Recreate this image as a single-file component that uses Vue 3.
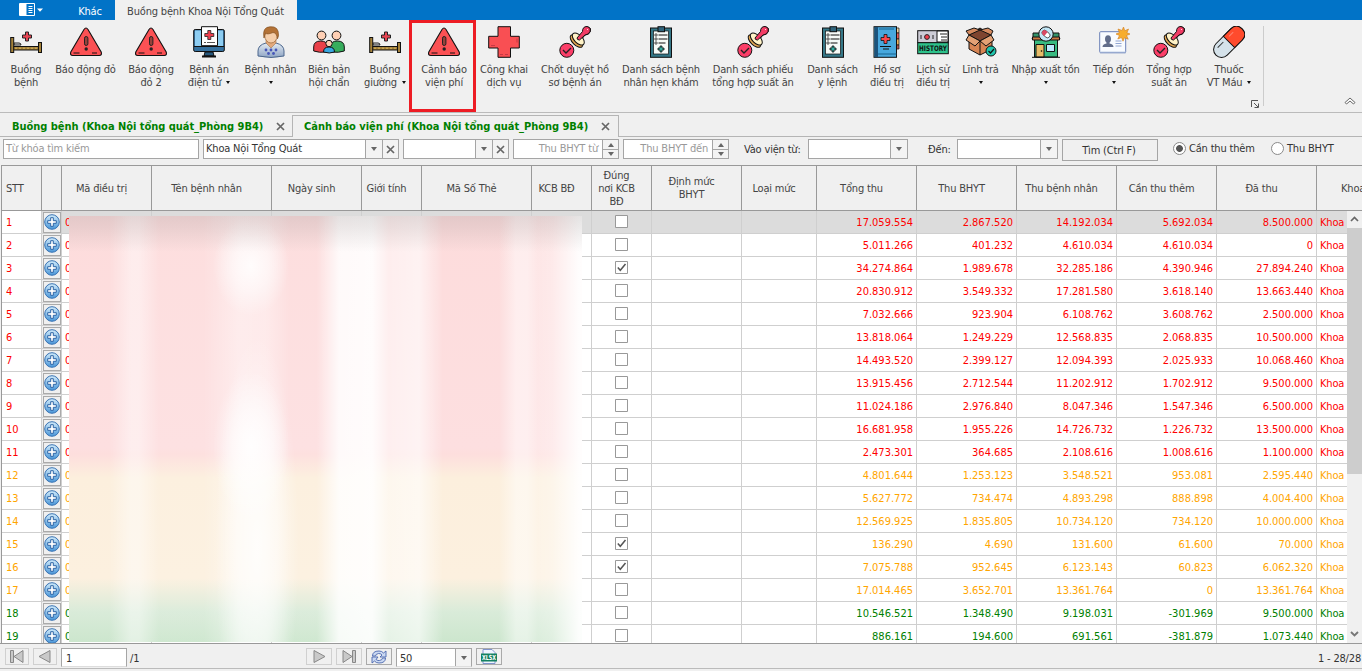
<script setup>
const ribbon = [
  { w: 40, icon: 'bed', lines: ['Buồng', 'bệnh'] },
  { w: 79, icon: 'warn', lines: ['Báo động đỏ'] },
  { w: 52, icon: 'warn', lines: ['Báo động', 'đỏ 2'] },
  { w: 64, icon: 'monitor', lines: ['Bệnh án', 'điện tử'], arrow: true },
  { w: 59, icon: 'patient', lines: ['Bệnh nhân', ''], arrow: true },
  { w: 58, icon: 'group', lines: ['Biên bản', 'hội chẩn'] },
  { w: 54, icon: 'bed', lines: ['Buồng', 'giường'], arrow: true },
  { w: 64, icon: 'warn', lines: ['Cảnh báo', 'viện phí'], marked: true },
  { w: 56, icon: 'cross', lines: ['Công khai', 'dịch vụ'] },
  { w: 86, icon: 'stamp', lines: ['Chốt duyệt hồ', 'sơ bệnh án'] },
  { w: 86, icon: 'clip', lines: ['Danh sách bệnh', 'nhân hẹn khám'] },
  { w: 98, icon: 'stamp', lines: ['Danh sách phiếu', 'tổng hợp suất ăn'] },
  { w: 61, icon: 'clip', lines: ['Danh sách', 'y lệnh'] },
  { w: 48, icon: 'book', lines: ['Hồ sơ', 'điều trị'] },
  { w: 44, icon: 'history', lines: ['Lịch sử', 'điều trị'] },
  { w: 51, icon: 'box', lines: ['Lĩnh trả', ''], arrow: true },
  { w: 79, icon: 'store', lines: ['Nhập xuất tồn', ''], arrow: true },
  { w: 57, icon: 'card', lines: ['Tiếp đón', ''], arrow: true },
  { w: 54, icon: 'stamp', lines: ['Tổng hợp', 'suất ăn'] },
  { w: 66, icon: 'pill', lines: ['Thuốc', 'VT Máu'], arrow: true },
]

const headers = [
  ['STT'], [''], ['Mã điều trị'], ['Tên bệnh nhân'], ['Ngày sinh'], ['Giới tính'], ['Mã Số Thẻ'],
  ['KCB BĐ'], ['Đúng', 'nơi KCB', 'BĐ'], ['Định mức', 'BHYT'], ['Loại mức'], ['Tổng thu'],
  ['Thu BHYT'], ['Thu bệnh nhân'], ['Cần thu thêm'], ['Đã thu'], ['Khoa'],
]

const rows = [
  '17.059.554 2.867.520 14.192.034 5.692.034 8.500.000',
  '5.011.266 401.232 4.610.034 4.610.034 0',
  '34.274.864 1.989.678 32.285.186 4.390.946 27.894.240',
  '20.830.912 3.549.332 17.281.580 3.618.140 13.663.440',
  '7.032.666 923.904 6.108.762 3.608.762 2.500.000',
  '13.818.064 1.249.229 12.568.835 2.068.835 10.500.000',
  '14.493.520 2.399.127 12.094.393 2.025.933 10.068.460',
  '13.915.456 2.712.544 11.202.912 1.702.912 9.500.000',
  '11.024.186 2.976.840 8.047.346 1.547.346 6.500.000',
  '16.681.958 1.955.226 14.726.732 1.226.732 13.500.000',
  '2.473.301 364.685 2.108.616 1.008.616 1.100.000',
  '4.801.644 1.253.123 3.548.521 953.081 2.595.440',
  '5.627.772 734.474 4.893.298 888.898 4.004.400',
  '12.569.925 1.835.805 10.734.120 734.120 10.000.000',
  '136.290 4.690 131.600 61.600 70.000',
  '7.075.788 952.645 6.123.143 60.823 6.062.320',
  '17.014.465 3.652.701 13.361.764 0 13.361.764',
  '10.546.521 1.348.490 9.198.031 -301.969 9.500.000',
  '886.161 194.600 691.561 -381.879 1.073.440',
].map((line, i) => ({
  n: i + 1,
  money: line.split(' '),
  checked: [3, 15, 16].includes(i + 1),
  tone: i < 11 ? 'red' : i < 17 ? 'orange' : 'green',
}))
</script>

<template>
  <svg width="0" height="0" class="defs">
    <defs>
      <linearGradient id="gBlue" x1="0" y1="0" x2="0" y2="1">
        <stop offset="0" stop-color="#d3ecfb" /><stop offset="1" stop-color="#4795d8" />
      </linearGradient>
      <linearGradient id="gBody" x1="0" y1="0" x2="0" y2="1">
        <stop offset="0" stop-color="#e3ebf3" /><stop offset="1" stop-color="#8fa5c4" />
      </linearGradient>
      <symbol id="bed" viewBox="0 0 32 32">
        <path d="M4 17h5q2 0 2 2H4z" fill="#ddd" stroke="#222" />
        <rect x="3" y="20.5" width="27" height="3.5" fill="#a5823a" stroke="#111" />
        <path d="M5 22.2h23" stroke="#d6b45e" stroke-dasharray="2 2" />
        <rect x=".7" y="11.5" width="3" height="15" fill="#a5823a" stroke="#111" />
        <rect x="28.5" y="16.5" width="3" height="10" fill="#a5823a" stroke="#111" />
        <path d="M15.5 6h3v3h3v3h-3v3h-3v-3h-3V9h3z" fill="#e64553" stroke="#222" />
      </symbol>
      <symbol id="warn" viewBox="0 0 32 32">
        <path d="M14 3.500q2-3 4 0l13.200 22.500q1 3.500-2 3.500H2.800q-3 0-2-3.500z" fill="#fb5154" stroke="#111" stroke-width="1.100" />
        <path d="M3.500 27h6M22 27h5" stroke="#111" />
        <rect x="14.500" y="10.500" width="3.400" height="9" rx="1.700" fill="#96413a" stroke="#222" />
        <circle cx="16.200" cy="23" r="1.700" fill="#222" />
      </symbol>
      <symbol id="monitor" viewBox="0 0 32 32">
        <path d="M12 26h8l1 4H11z" fill="#26577c" stroke="#111" />
        <path d="M9 30.500h14" stroke="#111" stroke-width="2" />
        <rect x=".7" y="3.500" width="30.600" height="22" rx="1.500" fill="#35719f" stroke="#111" />
        <path d="M2 4.500h28v15.500H2z" fill="#8dcdf2" />
        <path d="M1 20.500h30" stroke="#111" />
        <path d="M8.500.7h16v19h-16z" fill="#fff" stroke="#111" />
        <path d="M14.800 4.500h3v3h3v3h-3v3h-3v-3h-3v-3h3z" fill="#ef4050" stroke="#222" stroke-width=".8" />
        <path d="M11 16.500h2m1 0h8" stroke="#555" />
      </symbol>
      <symbol id="patient" viewBox="0 0 32 32">
        <path d="M3 30V25q0-6 8-8h10q8 2 8 8v5q-13 3-26 0z" fill="url(#gBody)" stroke="#4c678d" />
        <path d="M11 17l5 5 5-5v-4H11z" fill="#e2a97c" stroke="#96663c" stroke-width=".5" />
        <ellipse cx="16" cy="9.500" rx="6.300" ry="7.500" fill="#f5ceaa" stroke="#9a6435" stroke-width=".7" />
        <path d="M9 12Q7 1 15 .8q9-1 8.500 9l-1 3Q22 7 18 6.500 12 9 10.500 7z" fill="#b37236" stroke="#845021" stroke-width=".7" />
        <g fill="#4656b8"><circle cx="11" cy="24" r="1.400" /><circle cx="16" cy="24" r="1.400" /><circle cx="21" cy="24" r="1.400" /><circle cx="13.500" cy="27.500" r="1.400" /><circle cx="18.500" cy="27.500" r="1.400" /></g>
      </symbol>
      <symbol id="group" viewBox="0 0 32 32">
        <g stroke="#111">
          <path d="M.7 25v-4q0-6 7-6 6 0 7 5v6q-9 1-14-1z" fill="#e9414a" />
          <path d="M31.300 25v-4q0-6-7-6-6 0-7 5v6q9 1 14-1z" fill="#37ad5d" />
          <circle cx="8.500" cy="9.500" r="4.400" fill="#ffd0b5" /><circle cx="23.500" cy="9.500" r="4.400" fill="#ffd0b5" />
          <path d="M10.500 26q0-5 5.500-5t5.500 5q-5 2-11 0z" fill="#38a7e0" />
          <circle cx="16" cy="17.500" r="3.200" fill="#ffd0b5" />
        </g>
      </symbol>
      <symbol id="cross" viewBox="0 0 32 32">
        <path d="M10 .7h12.500v9.600h8.800V22h-8.800v9.300H10V22H.7V10.300H10z" fill="#f94f53" stroke="#111" />
        <path d="M12 28.500h3m2 0h3M3 19.500h4m22-7v4" stroke="#c73945" />
      </symbol>
      <symbol id="stamp" viewBox="0 0 32 32">
        <g stroke="#111">
          <path d="M20 11l5-5q0-5 4-5 4 1 2 5-1 3-5 3l-4 5z" fill="#f23c65" />
          <ellipse cx="17.500" cy="15" rx="4" ry="8" transform="rotate(-45 17.500 15)" fill="#e2a651" />
          <ellipse cx="19.300" cy="13" rx="4" ry="7.500" transform="rotate(-45 19.300 13)" fill="#fff3c7" />
          <path d="M18 12l5.500-6.500q0-5 4.500-5 4 1 3 5-1 3-5 3.500L20.500 14q-2.500 0-2.500-2z" fill="#f23c65" />
          <path d="M28 3l1 1" stroke="#ffd2dc" />
          <circle cx="7.800" cy="24.300" r="7" fill="#fb3e68" />
        </g>
        <path d="M4 24l3 3 5-5" fill="none" stroke="#222" stroke-width="1.400" />
      </symbol>
      <symbol id="clip" viewBox="0 0 32 32">
        <rect x="5.500" y="2" width="21" height="29.300" fill="#357787" stroke="#111" />
        <rect x="8.500" y="5" width="15" height="23" fill="#f7fbf8" stroke="#111" stroke-width=".7" />
        <rect x="13" y=".7" width="6.500" height="5" fill="#30647b" stroke="#111" />
        <path d="M13.500 9h9m-9 4h9m-9 4h7" stroke="#111" />
        <g fill="none" stroke="#333" stroke-width=".8"><path d="M10 8h2v2h-2zm0 4h2v2h-2zm0 4h2v2h-2z" /></g>
        <path d="M15 20h2v2h2v2h-2v2h-2v-2h-2v-2h2z" fill="#35ada0" stroke="#111" stroke-width=".8" />
      </symbol>
      <symbol id="book" viewBox="0 0 32 32">
        <g stroke="#111" stroke-width=".7"><path d="M24 2h4v5h-4z" fill="#f5d39b" /><path d="M24 7h4v6h-4z" fill="#e75d56" /><path d="M24 13h4v6h-4z" fill="#edb25c" /><path d="M24 19h4v4h-4z" fill="#b35551" /></g>
        <rect x="3" y=".7" width="22.500" height="30.600" fill="#48a8dd" stroke="#111" />
        <path d="M5.500 1v30" stroke="#1c537c" stroke-width="3" />
        <path d="M7 28h18.500M8 3h15" stroke="#176490" />
        <path d="M13 8.500h3v3h3v3h-3v3h-3v-3h-3v-3h3z" fill="#fb494e" stroke="#111" stroke-width=".8" />
        <path d="M9 20.500h11M12 23h6" stroke="#111" />
      </symbol>
      <symbol id="history" viewBox="0 0 32 32">
        <rect x=".7" y="4.700" width="30.600" height="12" fill="#cdccd6" stroke="#111" />
        <path d="M20 5h11v11H20z" fill="#fff" stroke="#111" /><path d="M23 8h7m-6 3h6m-6 3h6M4 9v4m12-4v4" stroke="#222" />
        <circle cx="10" cy="11" r="2.400" fill="#f23d4c" stroke="#222" />
        <rect x=".7" y="16.700" width="30.600" height="11" fill="#2dc28b" stroke="#111" />
        <text x="2" y="25" textLength="28" font-family="DejaVu Sans" font-weight="bold" font-size="7.500" letter-spacing="0" lengthAdjust="spacingAndGlyphs" fill="#111">HISTORY</text>
      </symbol>
      <symbol id="box" viewBox="0 0 32 32">
        <g stroke="#111" stroke-linejoin="round">
          <path d="M4 11l11-4 12 4v12l-12 6-11-6z" fill="#d78554" />
          <path d="M4 9l11-7 11 7-11 6z" fill="#7e442f" />
          <path d="M4 9l11 6-5 5-9-6zM26 9l-11 6 6 5 8-6z" fill="#e3a175" />
          <path d="M4 9L1 5l8-3 6 2 8-2 5 3-2 4-11-5z" fill="#d48a60" />
          <path d="M15 15v14" />
          <circle cx="26" cy="25" r="5" fill="#1fc5ad" />
        </g>
        <path d="M23.500 25l2 2 3.500-4" fill="none" stroke="#111" stroke-width="1.200" />
      </symbol>
      <symbol id="store" viewBox="0 0 32 32">
        <path d="M4.500 13h23v18h-23z" fill="#38bb81" stroke="#111" />
        <path d="M3 7h26v4l1 2H2l1-2z" fill="#34946b" stroke="#111" />
        <path d="M2.500 11h27v3h-27z" fill="#c87843" stroke="#111" />
        <path d="M6 18.500h8V31H6z" fill="#e8bd68" stroke="#111" /><circle cx="11.500" cy="25" r=".8" />
        <path d="M16.500 18.500h8v7h-8z" fill="#bdeaff" stroke="#111" />
        <path d="M2 31.300h28" stroke="#111" />
        <circle cx="16" cy="8" r="7.200" fill="#c3e7f6" stroke="#111" />
        <g transform="rotate(40 16 8)"><rect x="11.500" y="5.500" width="9" height="5" rx="2.500" fill="#fff" stroke="#222" stroke-width=".7" /><path d="M11.500 8q0-2.500 2.500-2.500h2v5h-2q-2.500 0-2.500-2.500" fill="#d94863" /></g>
      </symbol>
      <symbol id="card" viewBox="0 0 32 32">
        <rect x="1.700" y="5.700" width="26" height="21" rx="1" fill="#f8fbff" stroke="#6a80b7" />
        <path d="M2 26.500h26" stroke="#97a9cf" stroke-width="1.500" />
        <ellipse cx="10" cy="13" rx="3" ry="3.800" fill="#616d8b" /><path d="M4.500 21q0-3 4-3.500v-2h3v2q4 .5 4 3.500z" fill="#616d8b" />
        <path d="M17.500 15h6m-6 2.500h6m-6 2.500h6" stroke="#91a6d2" stroke-width="1.200" />
        <path d="M25.500 1l1.300 3.800 3.700-1.800-1.600 3.800L32 8l-3.500 1.500 1.700 3.700-3.700-1.500-1.500 3.500-1.500-3.700-3.700 1.500 1.700-3.500L18 8l3.500-1.400L20 3l4 1.500z" fill="#f7ad2c" stroke="#d6862c" stroke-width=".7" />
      </symbol>
      <symbol id="pill" viewBox="0 0 32 32">
        <g transform="rotate(-45 16 16)"><rect x="-2.500" y="8" width="37" height="16" rx="8" fill="#d5e2ea" stroke="#111" /><path d="M16 8h10.500q8 0 8 8t-8 8H16z" fill="#ff4b2d" stroke="#111" /><path d="M4 12h8" stroke="#333" /><path d="M20 12h6" stroke="#ff806e" /></g>
      </symbol>
      <symbol id="plus" viewBox="0 0 16 16">
        <circle cx="8" cy="8" r="7.300" fill="url(#gBlue)" stroke="#3973b3" />
        <path d="M6.700 3.700h2.600v3h3v2.600h-3v3H6.700v-3h-3V6.700h3z" fill="#fff" stroke="#215b9f" stroke-width=".9" />
      </symbol>
      <symbol id="x" viewBox="0 0 9 9"><path d="M1 1l7 7m0-7l-7 7" stroke="#666" stroke-width="1.700" /></symbol>
    </defs>
  </svg>

  <div class="app">
    <header class="top">
      <div class="menu">
        <svg width="26" height="14" viewBox="0 0 26 14"><path d="M.5.500h15v12H.5z" fill="none" stroke="#fff" /><path d="M1 1h6.500v11H1z" fill="#fff" /><path d="M9.500 3.500h4m-4 2h4m-4 2h4m-4 2h4" stroke="#fff" /><path d="M18 5.500h6l-3 3.300z" fill="#fff" /></svg>
      </div>
      <div class="toptab">Khác</div>
      <div class="toptab on">Buồng bệnh Khoa Nội Tổng Quát</div>
    </header>

    <section class="ribbon">
      <div v-for="(r, i) in ribbon" :key="i" class="tool" :class="{ marked: r.marked }" :style="{ width: r.w + 'px' }">
        <svg width="32" height="32"><use :href="'#' + r.icon" /></svg>
        <div v-for="(l, k) in r.lines" :key="k" class="tl">{{ l }}<i v-if="r.arrow && k === r.lines.length - 1" class="caret" :class="{ gap: l }" /></div>
      </div>
      <div class="sep"></div>
      <svg class="launch" width="8" height="8" viewBox="0 0 8 8"><path d="M.5 7V.5H7M3 3l4 4M7.500 3.500v4h-4" fill="none" stroke="#555" /></svg>
      <svg class="fold" width="12" height="9" viewBox="0 0 12 9"><path d="M1 5.500L6 1l5 4.500L9.500 7 6 4 2.500 7z" fill="#fff" stroke="#666" /></svg>
    </section>

    <nav class="tabs">
      <div class="tab t1"><span>Buồng bệnh (Khoa Nội tổng quát_Phòng 9B4)</span><svg width="9" height="9"><use href="#x" /></svg></div>
      <div class="tab t2"><span>Cảnh báo viện phí (Khoa Nội tổng quát_Phòng 9B4)</span><svg width="9" height="9"><use href="#x" /></svg></div>
      <div class="rest"></div>
    </nav>

    <section class="filter">
      <div class="box search ph">Từ khóa tìm kiếm</div>
      <div class="box c1"><span>Khoa Nội Tổng Quát</span><b><i class="tri" /></b><b><svg width="9" height="9"><use href="#x" /></svg></b></div>
      <div class="box c2"><span></span><b><i class="tri" /></b><b><svg width="9" height="9"><use href="#x" /></svg></b></div>
      <div class="box spin ph"><span>Thu BHYT từ</span><em><b><i class="tri up" /></b><b><i class="tri" /></b></em></div>
      <div class="box spin ph"><span>Thu BHYT đến</span><em><b><i class="tri up" /></b><b><i class="tri" /></b></em></div>
      <label class="l1">Vào viện từ:</label>
      <div class="box c3"><span></span><b><i class="tri" /></b></div>
      <label class="l2">Đến:</label>
      <div class="box c4"><span></span><b><i class="tri" /></b></div>
      <button class="find">Tìm (Ctrl F)</button>
      <div class="radio r1"><i class="dot on" />Cần thu thêm</div>
      <div class="radio r2"><i class="dot" />Thu BHYT</div>
    </section>

    <section class="grid">
      <div class="line head">
        <div v-for="(h, i) in headers" :key="i" class="cell"><div v-for="(t, k) in h" :key="k">{{ t }}</div></div>
      </div>
      <div class="body">
        <div v-for="r in rows" :key="r.n" class="line row" :class="[r.tone, { sel: r.n === 1 }]">
          <div class="cell num">{{ r.n }}</div>
          <div class="cell pluscell"><div class="pb"><svg width="16" height="16"><use href="#plus" /></svg></div></div>
          <div class="cell code">0</div>
          <div class="cell"></div><div class="cell"></div><div class="cell"></div><div class="cell"></div><div class="cell"></div>
          <div class="cell chk"><svg width="13" height="13" viewBox="0 0 13 13"><path d="M.5.500h12v12H.5z" fill="#fff" stroke="#999" /><path v-if="r.checked" d="M2.800 6.500l2.500 2.800L10.500 3" fill="none" stroke="#555" stroke-width="1.500" /></svg></div>
          <div class="cell"></div><div class="cell"></div>
          <div v-for="(m, k) in r.money" :key="k" class="cell money">{{ m }}</div>
          <div class="cell dept">Khoa</div>
        </div>
        <div class="veil"></div>
        <div class="scroll">
          <svg width="9" height="6" viewBox="0 0 9 6"><path d="M1 5l3.500-3.500L8 5" fill="none" stroke="#666" stroke-width="1.700" /></svg>
          <div class="thumb"></div>
          <svg width="9" height="6" viewBox="0 0 9 6"><path d="M1 1l3.500 3.500L8 1" fill="none" stroke="#777" stroke-width="1.900" /></svg>
        </div>
      </div>
    </section>

    <footer class="pager">
      <div class="pbtn w24"><svg width="14" height="13" viewBox="0 0 14 13"><path d="M.5.500h3v12h-3zM13 .5v12L4 6.500z" fill="#c9c9c9" stroke="#888" /></svg></div>
      <div class="pbtn w24 m5"><svg width="14" height="13" viewBox="0 0 14 13"><path d="M12 .5v12L1 6.500z" fill="#c9c9c9" stroke="#888" /></svg></div>
      <div class="pin">1</div>
      <div class="of">/1</div>
      <div class="pbtn w26"><svg width="14" height="13" viewBox="0 0 14 13"><path d="M2 .5v12l11-6z" fill="#c9c9c9" stroke="#888" /></svg></div>
      <div class="pbtn w26 m5"><svg width="14" height="13" viewBox="0 0 14 13"><path d="M10.500.500h3v12h-3zM1 .5v12l9-6z" fill="#c9c9c9" stroke="#888" /></svg></div>
      <div class="pbtn w26 m5 strong"><svg width="16" height="14" viewBox="0 0 16 14"><path d="M1.500 6q0-5 6.500-5 3 0 4.500 2L15 1v6H9l2-2Q9.500 3.300 7.500 3.500 4.500 4 4.500 6zM14.500 8q0 5-6.500 5-3 0-4.500-2L1 13V7h6L5 9.500Q7 11 8.500 10.500 11.500 10 11.500 8z" fill="#cbd9f2" stroke="#4b68af" stroke-width=".9" /></svg></div>
      <div class="psel"><span>50</span><b><i class="tri" /></b></div>
      <div class="pbtn w26 m5 strong"><svg width="18" height="15" viewBox="0 0 18 15"><path d="M3 .5h9l3 3v11H3z" fill="#eef4ff" stroke="#8094cd" /><path d="M1 4.500h16v8H1z" fill="#138161" /><text x="2" y="11.200" textLength="14" lengthAdjust="spacingAndGlyphs" letter-spacing="0" font-size="7" font-weight="bold" font-family="DejaVu Sans" fill="#fff">XLSX</text></svg></div>
      <div class="total">1 - 28/28</div>
    </footer>
  </div>
</template>

<style>
body { margin: 0; overflow: hidden; }
</style>

<style scoped>
.defs { position: absolute; }
* { box-sizing: border-box; }
.app { width: 1362px; height: 671px; background: #f0f0f0; overflow: hidden; display: flex; flex-direction: column; font: 11px/13px "DejaVu Sans Condensed", "DejaVu Sans", sans-serif; font-stretch: condensed; letter-spacing: -.18px; color: #444; white-space: nowrap; }
.top { height: 20px; flex: none; background: #0173c7; display: flex; }
.menu { width: 65px; padding: 3px 0 0 19px; }
.toptab { width: 50px; text-align: center; color: #fff; line-height: 23px; }
.toptab.on { width: 182px; background: #f0f0f0; color: #444; padding-right: 1px; }
.ribbon { height: 93px; flex: none; border-bottom: 1px solid #bbb; display: flex; padding-left: 6px; position: relative; }
.tool { display: flex; flex-direction: column; align-items: center; padding-top: 6px; flex: none; position: relative; }
.tool svg { margin-bottom: 5px; flex: none; }
.tool.marked::after { content: ''; box-sizing: border-box; position: absolute; left: -3px; top: 0; width: 67px; height: 92px; border: 3px solid #ed1c24; }
.tl { height: 13px; display: flex; align-items: center; }
.caret { border: 2.500px solid transparent; border-top: 3px solid #111; border-bottom: 0; }
.caret.gap { margin-left: 5px; }
.sep { width: 1px; height: 80px; margin: 6px 0 0 1px; background: #ccc; }
.launch { position: absolute; left: 1251px; top: 80px; }
.fold { position: absolute; left: 1344px; top: 77px; }
.tabs { height: 24px; flex: none; display: flex; font-weight: bold; color: #008000; }
.tab { display: flex; align-items: center; justify-content: space-between; letter-spacing: -.03px; padding-top: 3px; }
.t1 { width: 292px; padding-left: 12px; padding-right: 7px; border-bottom: 1px solid #b5b5b5; }
.t2 { width: 327px; margin-top: 2px; padding: 0 8px 1px 11px; border: 1px solid #b5b5b5; border-bottom: 0; }
.rest { flex: 1; border-bottom: 1px solid #b5b5b5; }
.filter { height: 28px; flex: none; display: flex; align-items: flex-start; padding: 2px 0 0 3px; }
.box { height: 20px; background: #fff; border: 1px solid #a5a5a5; display: flex; flex: none; line-height: 18px; padding-left: 3px; margin-right: 4px; }
.box span { flex: 1; color: #333; }
.box b { width: 17px; border-left: 1px solid #a5a5a5; background: #f3f3f3; display: flex; align-items: center; justify-content: center; flex: none; }
.box b + b { width: 16px; }
.tri { border: 3.500px solid transparent; border-top: 4px solid #666; border-bottom: 0; }
.tri.up { border-top: 0; border-bottom: 4px solid #666; }
.ph, .box.ph span { color: #999; }
.search { width: 196px; padding-left: 2px; }
.c1 { width: 196px; padding-left: 2px; }
.c2 { width: 106px; }
.box.spin { width: 106px; }
.spin span { text-align: right; padding-right: 4px; }
.spin em { width: 16px; display: flex; flex-direction: column; border-left: 1px solid #a5a5a5; }
.spin em b, .spin em b + b { width: 15px; height: 9px; border-left: 0; }
.spin em b + b { border-top: 1px solid #a5a5a5; }
.filter label { line-height: 22px; color: #333; }
.l1 { width: 69px; padding-left: 11px; margin-right: -4px; flex: none; }
.l1 + .box { margin-left: 10px; }
.c3 { width: 100px; }
.l2 { width: 45px; padding-left: 16px; flex: none; }
.c4 { width: 101px; }
.find { width: 96px; height: 22px; border: 1px solid #a5a5a5; background: #f0f0f0; font: inherit; letter-spacing: inherit; color: #333; padding: 0 2px 0 0; flex: none; }
.radio { display: flex; align-items: center; gap: 3px; height: 19px; margin-left: 15px; color: #333; }
.r1 { width: 83px; }
.dot { width: 13px; height: 13px; border: 1px solid #8a8a8a; border-radius: 50%; background: #fff; flex: none; }
.dot.on { background: radial-gradient(circle, #555 0 3px, #fff 3.800px); }
.grid { height: 478px; flex: none; border-left: 1px solid #999; margin-left: 1px; }
.line { display: grid; grid-template-columns: 40px 20px 90px 120px 90px 60px 110px 60px 60px 90px 75px 100px 100px 100px 100px 100px 46px; }
.head { height: 46px; border: solid #999; border-width: 1px 0; }
.head .cell { border-right: 1px solid #999; display: flex; flex-direction: column; justify-content: center; align-items: center; padding-right: 10px; overflow: hidden; }
.head .cell:first-child { align-items: flex-start; padding-left: 4px; }
.head .cell:last-child { align-items: flex-start; padding: 0 0 0 24px; border-right: 0; }
.body { height: 432px; overflow: hidden; position: relative; background: #fff; }
.row { height: 23px; line-height: 24px; }
.row .cell { border: solid #cfcfcf; border-width: 0 1px 1px 0; height: 23px; }
.row.sel .cell:not(.num) { background: #dcdcdc; }
.red { color: #f00; }
.orange { color: #ffa500; }
.green { color: #008000; }
.num { padding-left: 4px; letter-spacing: 0; }
.row .pluscell { padding-left: 1px; background: #f0f0f0; }
.pb { width: 18px; height: 21px; border: 1px solid #aaa; background: #f0f0f0; display: flex; align-items: center; margin-top: 1px; }
.pb svg { flex: none; margin-top: -2px; }
.code { padding-left: 3px; }
.chk { display: flex; align-items: center; justify-content: center; padding-bottom: 1px; }
.money { text-align: right; padding-right: 3px; letter-spacing: 0; }
.dept { padding-left: 3px; }
.veil {
  position: absolute; left: 67px; top: 5px; width: 513px; height: 426px;
  background:
    linear-gradient(rgba(110,110,110,.18), rgba(110,110,110,.13) 12px, transparent 36px),
    radial-gradient(ellipse 38px 50px at 182px 50px, #fffd 0, rgba(255,255,255,.5) 50%, transparent),
    radial-gradient(ellipse 38px 75px at 182px 230px, #fffd 0, rgba(255,255,255,.5) 50%, transparent),
    radial-gradient(ellipse 42px 210px at 188px 330px, #ffffffcc 0, #ffffff80 50%, transparent),
    linear-gradient(90deg, #fff0 0, #fff0 40px, #ffffff75 62px, #ffffff75 70px, #fff1 90px, #fff1 135px, #ffffff70 170px, #ffffff60 198px, #fff1 220px, #fff1 248px, #ffffffd8 270px, #ffffffe8 303px, #ffffff80 320px, #ffffffa0 350px, #fff0 374px, #fff0 430px, #ffffff80 447px, #ffffff80 458px, #ffffff48 469px, #ffffff60 483px, #fffffff0 510px),
    linear-gradient(#fddcdc 0, #fddfe0 232px, #fddedd 238px, #fcefdd 262px, #fcf0df 362px, #d9ebd9 396px, #cce6cd 426px);
}
.scroll { position: absolute; right: 0; top: 0; width: 15px; height: 432px; background: #f0f0f0; display: flex; flex-direction: column; align-items: center; padding: 5px 0 6px; }
.thumb { width: 15px; height: 246px; background: #cdcdcd; margin: 6px 0 auto; flex: none; }
.pager { height: 26px; border: solid #999; border-width: 1px 0; border-bottom-color: #bbb; display: flex; padding: 4px 0 0 5px; flex: none; color: #333; }
.pbtn { height: 17px; border: 1px solid #d0d0d0; display: flex; justify-content: center; align-items: center; flex: none; }
.pbtn.strong { border-color: #aaa; }
.w24 { width: 24px; }
.w26 { width: 26px; }
.m5 { margin-left: 4px; }
.pin { width: 66px; height: 19px; margin-left: 4px; border: 1px solid #a5a5a5; border-bottom-color: #ddd; background: #fff; line-height: 19px; padding-left: 4px; flex: none; }
.of { width: 179px; padding-left: 3px; line-height: 21px; flex: none; }
.psel { width: 76px; height: 19px; margin-left: 4px; border: 1px solid #a5a5a5; border-bottom-color: #ddd; background: #fff; display: flex; line-height: 19px; padding-left: 3px; flex: none; }
.psel span { flex: 1; }
.psel b { width: 16px; border-left: 1px solid #a5a5a5; background: #f3f3f3; display: flex; align-items: center; justify-content: center; }
.total { margin-left: auto; line-height: 21px; padding-right: 1px; }
</style>
